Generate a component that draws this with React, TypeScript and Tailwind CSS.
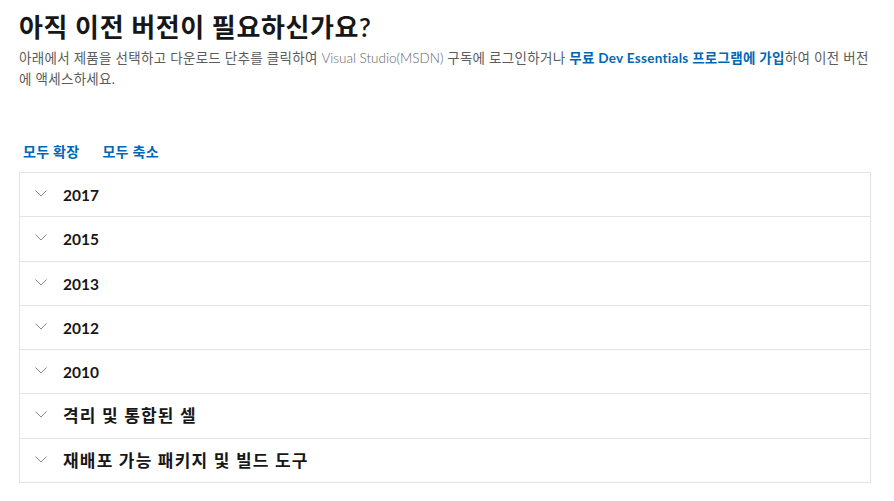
const versions = ['2017', '2015', '2013', '2012', '2010', '격리 및 통합된 셀', '재배포 가능 패키지 및 빌드 도구'];

function Chevron() {
  return (
    <svg width="12" height="7" viewBox="0 0 12 7" fill="none" className="mt-[2px] shrink-0">
      <path d="M0.5 0.5L6 6L11.5 0.5" stroke="#8a8a8a" strokeWidth="1" />
    </svg>
  );
}

export default function App() {
  return (
    <div
      className="min-h-[501px] bg-white pl-[19px] pr-[23px] pt-[8px] text-[#171717]"
      style={{ fontFamily: 'Lato, "Noto Sans CJK KR", sans-serif' }}
    >
      <h1 className="text-[26px] font-semibold leading-[38px] tracking-[0.6px]">아직 이전 버전이 필요하신가요?</h1>
      <p className="mt-[2px] text-[13.5px] leading-[21px] tracking-[0.3px] text-[#5c5c5c]">
        <span className="block whitespace-nowrap">
          아래에서 제품을 선택하고 다운로드 단추를 클릭하여 <span className="font-light tracking-normal text-[#666]">Visual Studio(MSDN)</span> 구독에 로그인하거나{' '}
          <a className="font-bold text-[#0067b8]">무료 Dev Essentials 프로그램에 가입</a>하여 이전 버전
        </span>
        <span className="block">에 액세스하세요.</span>
      </p>

      <div className="mt-[52px] flex gap-[23px] pl-[4px] text-[14px] font-bold leading-[20px] tracking-[0.3px] text-[#0067b8]">
        <a>모두 확장</a>
        <a>모두 축소</a>
      </div>

      <div className="mt-[10px] border border-[#e3e3e3] border-b-0">
        {versions.map((v) => (
          <div key={v} className="flex h-[44.3px] items-start gap-[16px] border-b border-[#e3e3e3] pl-[15px] pt-[15px]">
            <Chevron />
            {/^\d+$/.test(v) ? (
              <span className="-mt-[4px] text-[15.5px] font-bold leading-[22px] text-[#171717]">{v}</span>
            ) : (
              <span className="-mt-[5px] text-[17px] font-bold leading-[24px] tracking-[1.2px] text-[#171717]">{v}</span>
            )}
          </div>
        ))}
      </div>
    </div>
  );
}
